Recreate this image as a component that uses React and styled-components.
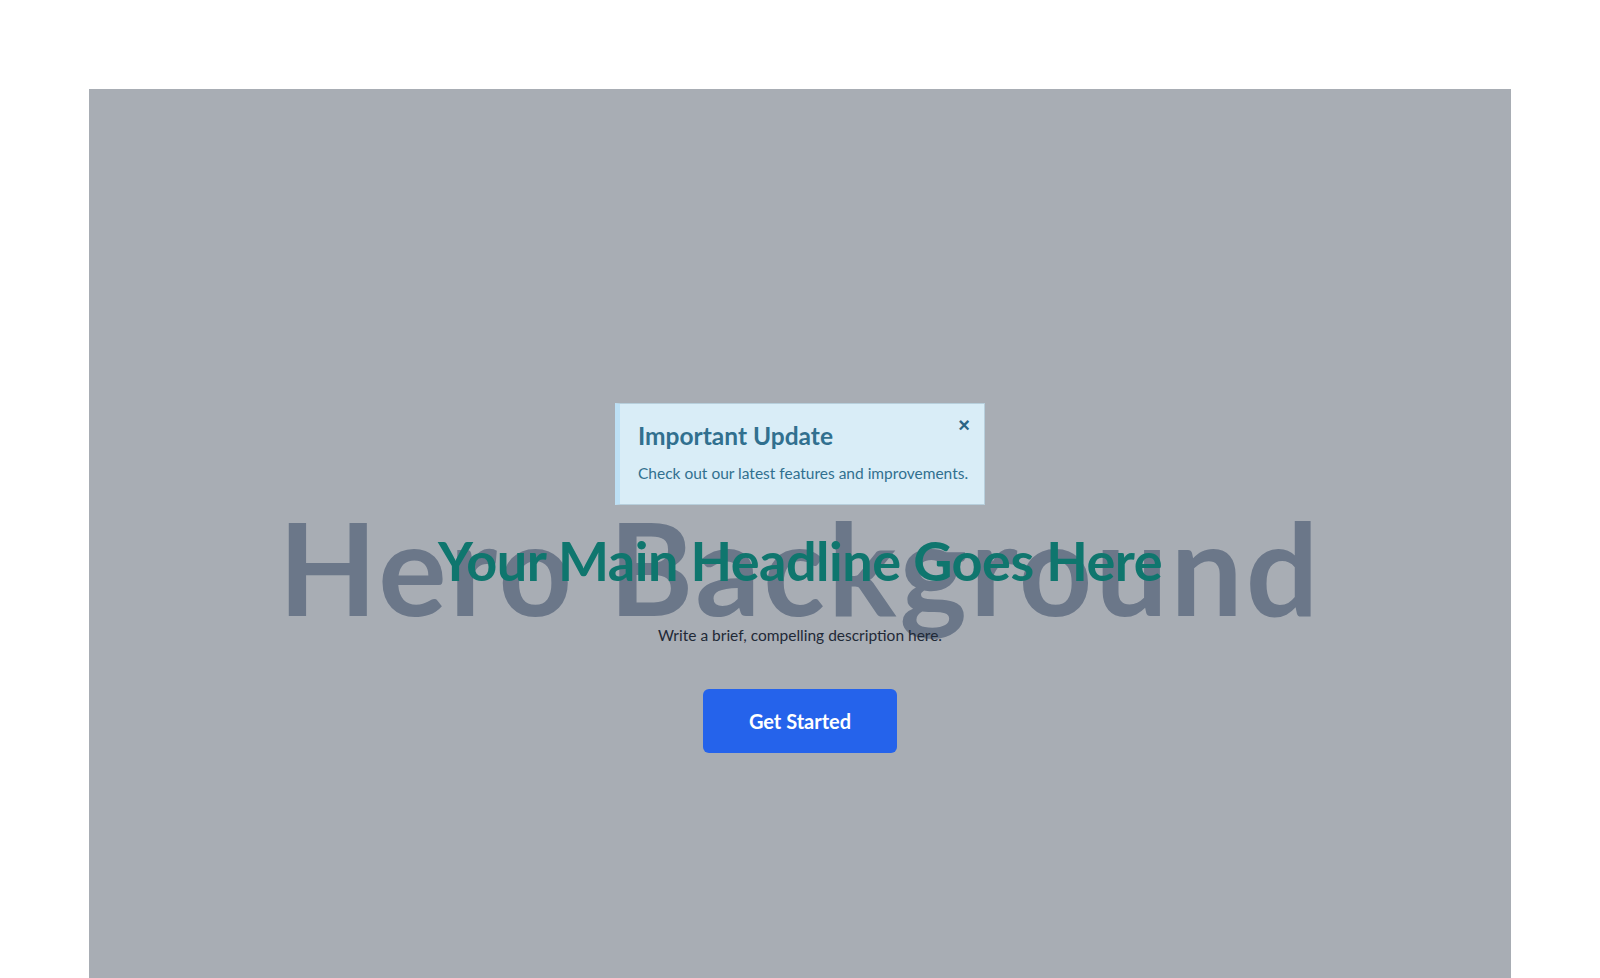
import styled, { createGlobalStyle } from "styled-components";

const GlobalStyle = createGlobalStyle`
    * {
        box-sizing: border-box;
    }
    body {
        margin: 0;
        font-family: "Lato", "Liberation Sans", sans-serif;
        background: #ffffff;
    }
`

const Page = styled.div`
    padding: 89px 89px 0;
`
const Hero = styled.section`
    position: relative;
    min-height: 100vh;
    background-color: #a8adb4;
    display: flex;
    flex-direction: column;
    align-items: center;
    justify-content: center;
    overflow: hidden;
`
const BackdropWord = styled.div`
    position: absolute;
    inset: 0;
    display: flex;
    align-items: center;
    justify-content: center;
    padding-bottom: 24px;
    font-family: "Lato", sans-serif;
    font-size: 128px;
    font-weight: 700;
    letter-spacing: 3px;
    color: #6b7789;
    white-space: nowrap;
    user-select: none;
`
const Content = styled.div`
    position: relative;
    display: flex;
    flex-direction: column;
    align-items: center;
    text-align: center;
`
const Alert = styled.div`
    position: relative;
    width: 370px;
    padding: 17px 40px 19px 18px;
    background-color: #d9edf7;
    border: 1px solid #b7cfdc;
    border-left: 5px solid #bde0f5;
    color: #31708f;
    text-align: left;
`
const AlertTitle = styled.h4`
    margin: 0 0 12px;
    font-size: 24.5px;
    font-weight: 700;
    line-height: 1.25;
`
const AlertText = styled.p`
    margin: 0;
    font-size: 15.5px;
    line-height: 1.4;
    white-space: nowrap;
`
const CloseButton = styled.button`
    position: absolute;
    top: 11px;
    right: 14px;
    padding: 0;
    border: none;
    background: none;
    color: #2a6585;
    font-size: 20px;
    font-weight: 700;
    line-height: 1;
    cursor: pointer;
`
const Headline = styled.h1`
    margin: 24px 0 0;
    font-size: 54px;
    font-weight: 700;
    line-height: 1.2;
    letter-spacing: -0.5px;
    color: #0f766e;
`
const Description = styled.p`
    margin: 30px 0 0;
    font-size: 15.5px;
    line-height: 1.5;
    color: #1f2937;
`
const CtaButton = styled.button`
    margin-top: 42px;
    width: 194px;
    height: 64px;
    border: none;
    border-radius: 6px;
    background-color: #2563eb;
    color: #ffffff;
    font-family: inherit;
    font-size: 20px;
    font-weight: 700;
    cursor: pointer;
`

const App = () => {
    return (
        <>
            <GlobalStyle />
            <Page>
                <Hero>
                    <BackdropWord>Hero Background</BackdropWord>
                    <Content>
                        <Alert>
                            <AlertTitle>Important Update</AlertTitle>
                            <AlertText>Check out our latest features and improvements.</AlertText>
                            <CloseButton aria-label="Close">×</CloseButton>
                        </Alert>
                        <Headline>Your Main Headline Goes Here</Headline>
                        <Description>Write a brief, compelling description here.</Description>
                        <CtaButton>Get Started</CtaButton>
                    </Content>
                </Hero>
            </Page>
        </>
    );
};

export default App;
